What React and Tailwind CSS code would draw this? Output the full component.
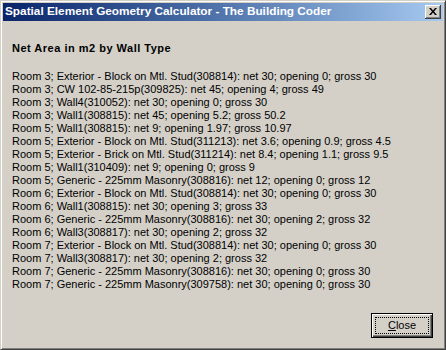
import React from 'react'

const lines = [
  'Room 3; Exterior - Block on Mtl. Stud(308814): net 30; opening 0; gross 30',
  'Room 3; CW 102-85-215p(309825): net 45; opening 4; gross 49',
  'Room 3; Wall4(310052): net 30; opening 0; gross 30',
  'Room 3; Wall1(308815): net 45; opening 5.2; gross 50.2',
  'Room 5; Wall1(308815): net 9; opening 1.97; gross 10.97',
  'Room 5; Exterior - Block on Mtl. Stud(311213): net 3.6; opening 0.9; gross 4.5',
  'Room 5; Exterior - Brick on Mtl. Stud(311214): net 8.4; opening 1.1; gross 9.5',
  'Room 5; Wall1(310409): net 9; opening 0; gross 9',
  'Room 5; Generic - 225mm Masonry(308816): net 12; opening 0; gross 12',
  'Room 6; Exterior - Block on Mtl. Stud(308814): net 30; opening 0; gross 30',
  'Room 6; Wall1(308815): net 30; opening 3; gross 33',
  'Room 6; Generic - 225mm Masonry(308816): net 30; opening 2; gross 32',
  'Room 6; Wall3(308817): net 30; opening 2; gross 32',
  'Room 7; Exterior - Block on Mtl. Stud(308814): net 30; opening 0; gross 30',
  'Room 7; Wall3(308817): net 30; opening 2; gross 32',
  'Room 7; Generic - 225mm Masonry(308816): net 30; opening 0; gross 30',
  'Room 7; Generic - 225mm Masonry(309758): net 30; opening 0; gross 30',
]

export default function App() {
  return (
    <div className="h-[350px] w-[446px] overflow-hidden bg-[#d4d0c8] font-['Liberation_Sans',Arial,sans-serif] text-black">
      {/* window frame */}
      <div className="flex h-full w-full flex-col border border-t-[#d4d0c8] border-l-[#d4d0c8] border-r-[#404040] border-b-[#404040] p-[2px] shadow-[inset_1px_1px_0_#ffffff,inset_-1px_-1px_0_#808080]">
        {/* title bar */}
        <div className="flex h-[18px] shrink-0 items-center justify-between bg-gradient-to-r from-[#0a246a] to-[#a6caf0] pl-[2px] pr-[2px]">
          <span className="text-[11.8px] font-bold leading-none text-white">
            Spatial Element Geometry Calculator - The Building Coder
          </span>
          <div className="flex h-[14px] w-[16px] items-center justify-center bg-[#d4d0c8] shadow-[inset_-1px_-1px_0_#404040,inset_1px_1px_0_#ffffff,inset_-2px_-2px_0_#808080]">
            <svg width="8" height="7" viewBox="0 0 8 7" className="mb-[1px]">
              <path d="M0 0h2l2 2.5L6 0h2L5 3.5 8 7H6L4 4.5 2 7H0l3-3.5z" fill="#000" />
            </svg>
          </div>
        </div>

        {/* body */}
        <div className="flex flex-1 flex-col pl-[9px] pr-[10px]">
          <div className="mt-[21px] text-[11px] font-bold leading-[13px] tracking-[0.5px]">Net Area in m2 by Wall Type</div>
          <div className="mt-[15px] text-[11px] leading-[13px]">
            {lines.map((l, i) => (
              <div key={i} className="whitespace-nowrap">{l}</div>
            ))}
          </div>
          <div className="mt-auto mb-[9px] flex justify-end">
            <button className="flex h-[25px] w-[62px] items-center justify-center border border-black bg-[#d4d0c8] p-0 shadow-[inset_1px_1px_0_#ffffff,inset_-1px_-1px_0_#404040,inset_-2px_-2px_0_#808080]">
              <span className="flex h-[17px] w-[54px] items-center justify-center border border-dotted border-black text-[11px] leading-none">
                <span><span className="underline underline-offset-1">C</span>lose</span>
              </span>
            </button>
          </div>
        </div>
      </div>
    </div>
  )
}
